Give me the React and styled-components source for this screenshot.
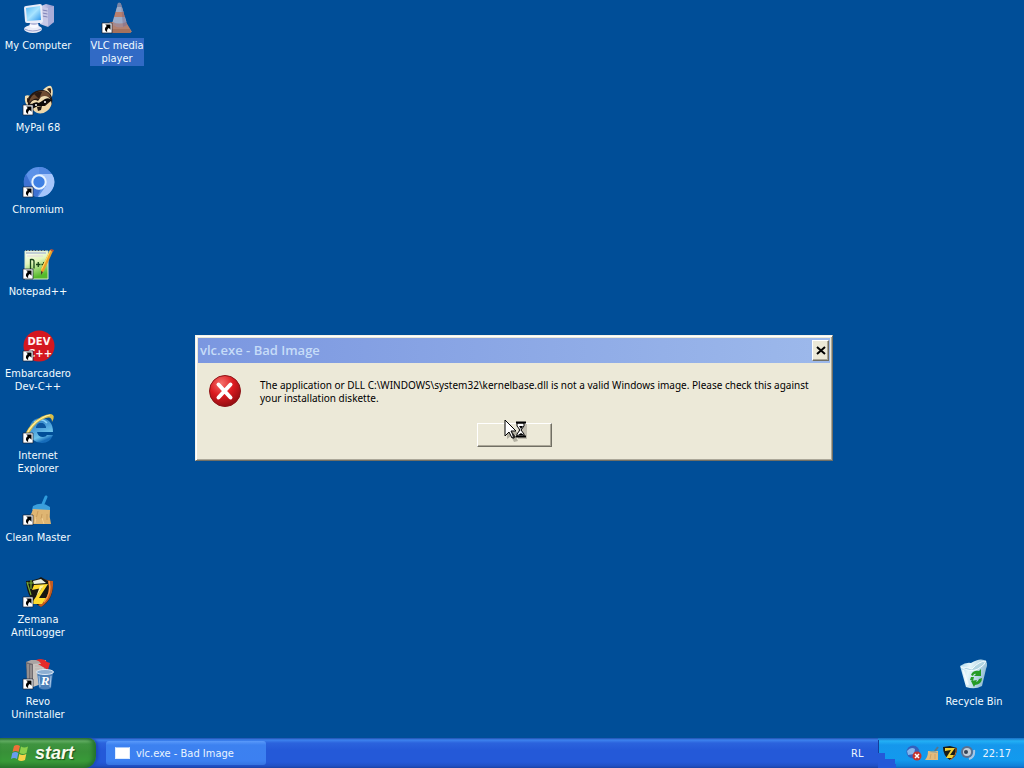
import React from "react";
import styled, { createGlobalStyle, css } from "styled-components";

const GlobalStyle = createGlobalStyle`
  *, *::before, *::after { box-sizing: border-box; }
  body {
    margin: 0;
    font-family: "DejaVu Sans Condensed", "DejaVu Sans", sans-serif;
    font-size: 11px;
    line-height: 13px;
    overflow: hidden;
  }
  button { font: inherit; color: inherit; padding: 0; border: 0; background: none; }
`;

const Screen = styled.div`
  position: relative;
  display: flex;
  flex-direction: column;
  min-height: 100vh;
  background: #004e98;
`;

const Desktop = styled.main`
  flex: 1;
  display: grid;
  grid-template-columns: 76px 82px 1fr 78px;
  grid-template-rows: repeat(9, 82px);
  grid-auto-flow: column;
  padding-right: 11px;
`;

const Shortcut = styled.button`
  display: flex;
  flex-direction: column;
  align-items: center;
  gap: 4px;
  padding-top: 2px;
  color: #f2fbff;
  ${(p) => p.$corner && css`grid-column: 4; grid-row: 9;`}
`;

const Picture = styled.svg`
  display: block;
  flex: none;
  width: 32px;
  height: 32px;
  overflow: visible;
`;

const Label = styled.span`
  padding: 1px 0;
  text-align: center;
  white-space: pre;
  background: ${(p) => (p.$selected ? "#316ac5" : "transparent")};
`;

const Dialog = styled.section`
  position: absolute;
  left: 195px;
  top: 335px;
  width: 638px;
  padding: 3px;
  background: #ece9d8;
  border: 1px solid;
  border-color: #f4f3ea #716f64 #716f64 #f4f3ea;
  box-shadow: inset 1px 1px #fff, inset -1px -1px #aca899;
`;

const TitleBar = styled.header`
  display: flex;
  align-items: center;
  justify-content: space-between;
  height: 25px;
  margin: -1px -1px 0;
  padding: 0 1px 1px 2px;
  background: linear-gradient(90deg, #7b97e0, #9db9eb);
`;

const Title = styled.h1`
  margin: 0;
  font: 600 13px/18px "Open Sans", "Noto Sans", sans-serif;
  color: #c6dcf8;
`;

const CloseButton = styled.button`
  display: grid;
  place-items: center;
  width: 17px;
  height: 21px;
  background: #ece9d8;
  border: 1px solid;
  border-color: #fff #716f64 #716f64 #fff;
  box-shadow: inset -1px -1px #aca899;
`;

const Message = styled.div`
  display: flex;
  gap: 19px;
  padding: 12px 4px 0 10px;
`;

const MessageText = styled.p`
  margin: 0;
  padding-top: 4px;
  font-family: "Noto Sans", "Open Sans", sans-serif;
  font-size: 10px;
  color: #000;
`;

const Actions = styled.footer`
  display: flex;
  justify-content: center;
  padding: 16px 0 10px;
`;

const PushButton = styled.button`
  width: 75px;
  height: 24px;
  background: #ece9d8;
  border: 1px solid;
  border-color: #fff #716f64 #716f64 #fff;
  box-shadow: inset -1px -1px #aca899;
`;

const Pointer = styled.svg`
  position: absolute;
  left: 504px;
  top: 419px;
  width: 26px;
  height: 24px;
  pointer-events: none;
`;

const Taskbar = styled.nav`
  display: flex;
  height: 30px;
  color: #eaf4ff;
  background: linear-gradient(#1f4fae 0, #3d83ee 2px, #2b63dd 5px, #2459d8 12px, #2459d8 24px, #2050c4 28px, #1a42a4 30px);
`;

const StartButton = styled.button`
  display: flex;
  align-items: center;
  gap: 6px;
  width: 96px;
  padding: 0 0 0 11px;
  border-radius: 0 8px 12px 0;
  background: linear-gradient(#2f6f3b 0, #64ae64 3px, #3f9440 6px, #389038 14px, #389a38 23px, #2c7a2e 30px);
  box-shadow: inset -3px 0 4px #22712b, 2px 0 3px #1c47b8;
  font: italic bold 18px/22px "Liberation Sans", sans-serif;
  color: #f8fbee;
  text-shadow: 1px 1px 1px #1b4c1c;
`;

const Flag = styled.svg`
  width: 18px;
  height: 18px;
`;

const TaskButton = styled.button`
  display: flex;
  align-items: center;
  gap: 6px;
  width: 160px;
  height: 24px;
  margin: 3px auto 0 10px;
  padding-left: 9px;
  border-radius: 3px;
  background: linear-gradient(#5a9afa, #3c81f0 4px, #3c80f1 20px, #3674e0);
`;

const WindowGlyph = styled.span`
  width: 15px;
  height: 12px;
  background: #fff;
  border: 1px solid #dcecff;
  border-top-color: #a8c8f8;
`;

const Language = styled.span`
  align-self: center;
  width: 27px;
`;

const Tray = styled.div`
  position: relative;
  display: flex;
  align-items: center;
  width: 146px;
  padding: 0 13px 0 28px;
  background: linear-gradient(#1a6fc4 0, #23b0f5 3px, #1597ec 7px, #129aee 22px, #0f80d8 28px, #0e66c0 30px);
`;

const TrayStep = styled.svg`
  position: absolute;
  left: 0;
  top: 0;
  width: 20px;
  height: 30px;
`;

const TrayIcons = styled.div`
  display: flex;
  gap: 2px;
  margin-right: auto;
`;

const TrayIcon = styled.svg`
  width: 16px;
  height: 16px;
`;

const ShortcutMark = () => (
  <g>
    <path d="M1 21h10v10H1z" fill="#fff" stroke="#182030" strokeWidth=".7" />
    <path d="M4.200 22.500h5.300v5.300L7.800 26C6.200 27 5.800 28.200 6.200 30 3.200 28.500 3.300 26 5.800 24z" fill="#000" />
  </g>
);

const ComputerArt = () => (
  <>
    <defs>
      <linearGradient id="crt" x2="1" y2="1"><stop stopColor="#55b7f5" /><stop offset=".5" stopColor="#a8e4ff" /><stop offset="1" stopColor="#2e95ea" /></linearGradient>
      <linearGradient id="tower" x2="1"><stop stopColor="#dcdaf0" /><stop offset="1" stopColor="#8c90c8" /></linearGradient>
    </defs>
    <path d="M19 4l5-2 8 2v16l-6 5-8-3z" fill="url(#tower)" />
    <path d="M20 5l6 1v18l-6-2z" fill="#c8c8e6" />
    <path d="M20.500 8l5 1M20.500 11l5 1M20.500 14l5 1" stroke="#8084b8" />
    <path d="M26 6l6-2v16l-6 4z" fill="#a9add9" />
    <path d="M2 6Q2 4 4 4l14-2q2 0 2 2l1 15q0 2-2 2L5 21q-2 0-2-2z" fill="#e9ecf8" />
    <path d="M4 6l14-2 1 14-14 1z" fill="url(#crt)" />
    <path d="M8 21h8l1 3H7z" fill="#b7bbdc" />
    <ellipse cx="11" cy="27" rx="9" ry="4" fill="#e9ebf7" />
    <path d="M2.500 27q8 4 17 0" fill="none" stroke="#9da2cd" />
    <path d="M8 22q4 2 8 0v3q-4 2-8 0z" fill="#f8f9ff" />
  </>
);

const ConeArt = () => (
  <>
    <path d="M6 24l3-4h16l6 10H8z" fill="#b48270" />
    <path d="M8 27h21l1 4H9z" fill="#a5725d" />
    <path d="M17 1q2-1 3 1l6 21q-7 5-14 0z" fill="#a58a91" />
    <path d="M16 5l5 0 1.500 5h-8zM13 15h11l1.500 5q-7 3-14 0z" fill="#9dabc6" />
    <path d="M17 1q2-1 3 1l1 3h-5z" fill="#7986a8" />
    <path d="M14.500 10h8l1.300 5H13z" fill="#b9806e" />
    <path d="M20 2l6 21-4 2z" fill="#6d5d80" opacity=".35" />
    <ShortcutMark />
  </>
);

const RaccoonArt = () => (
  <>
    <path d="M3 12q3-2 7 1l-3 10q-5-3-4-11zM21 6q5-5 8-4 3 4 1 11z" fill="#f1ddb0" />
    <path d="M5 14q2 0 2 2l-2 3zM25 5q3-2 4 0l0 5z" fill="#3e2618" />
    <path d="M6 21Q4 11 14 7q10-3 15 4 4 10-4 15-11 6-19-5z" fill="#241813" />
    <path d="M8 15Q13 6 23 7q5 2 6 7-7-4-12 1-5-2-10 4z" fill="#6f4c32" />
    <path d="M12 10q4-3 8-2l-3 7z" fill="#2a1a13" />
    <path d="M8 20q3-6 8-3l3-4q6-3 10 3-6-2-8 2-4 0-6 3-4-2-7-1z" fill="#f0dcb1" />
    <path d="M9 21q4-4 8-2l6-4q5-2 7 2-4 0-7 4l-6 4q-6 1-8-4z" fill="#0b0909" />
    <path d="M10 25l6-3 7 0 6-5q2 5-4 10-8 6-15-2z" fill="#eed8aa" />
    <path d="M15 23l5-1-1 4-3 1z" fill="#1c1513" />
    <circle cx="14" cy="21" r="1" fill="#fff" /><circle cx="23" cy="18" r="1" fill="#fff" />
    <ShortcutMark />
  </>
);

const ChromiumArt = () => (
  <>
    <circle cx="17" cy="16" r="15" fill="#5c92e8" />
    <path d="M17 1a15 15 0 0 1 15 15H17z" fill="#5289e2" />
    <path d="M17 8h13A15 15 0 0 1 16 31l8-11z" fill="#a5c5fb" />
    <path d="M4 8l6 12q4 5 9 3l-4 8A15 15 0 0 1 4 8z" fill="#3e72d2" />
    <circle cx="17" cy="16" r="7.700" fill="#e8f4ff" />
    <circle cx="17" cy="16" r="5.700" fill="#3e80e3" />
    <ShortcutMark />
  </>
);

const NotepadArt = () => (
  <>
    <defs><linearGradient id="page" x2=".3" y2="1"><stop stopColor="#fff" /><stop offset=".45" stopColor="#e2f6bc" /><stop offset="1" stopColor="#55b92b" /></linearGradient></defs>
    <path d="M3 3h23v28H3z" fill="url(#page)" stroke="#dbe9c8" />
    <path d="M4 5h20" stroke="#c1ced4" strokeWidth="2" />
    <path d="M4 2.500h20" stroke="#445" strokeDasharray="1 2" />
    <path d="M5 8h16" stroke="#e3d8dc" />
    <path d="M8.500 21v-10M8.500 11.500h1.500q2 0 2 2v7M14 16.500h4.500M16.250 14v5M19.500 16.500h4.500M21.750 14v5" fill="none" stroke="#184418" strokeWidth="1.300" />
    <path d="M28 2l3 1-9 20-3 3 0-5z" fill="#ec9f28" />
    <path d="M28 2l1 .500-9 19-1 0z" fill="#ffe266" />
    <path d="M28 2l1-1 3 1-1 2z" fill="#b85037" /><path d="M19 23l2 1-2 3z" fill="#44362c" />
    <ShortcutMark />
  </>
);

const BadgeText = styled.text`
  font: bold 10px "DejaVu Sans", sans-serif;
  fill: #fff4f2;
  text-anchor: middle;
`;

const DevArt = () => (
  <>
    <circle cx="17" cy="16" r="15.500" fill="#d4171f" />
    <BadgeText x="17" y="15">DEV</BadgeText>
    <BadgeText x="18" y="27">C++</BadgeText>
    <ShortcutMark />
  </>
);

const ExplorerArt = () => (
  <>
    <defs><linearGradient id="globe" x2=".4" y2="1"><stop stopColor="#2474bd" /><stop offset=".5" stopColor="#4c9fda" /><stop offset=".8" stopColor="#6cc3ec" /><stop offset="1" stopColor="#166cba" /></linearGradient></defs>
    <path d="M31 20H15q1 5 6 5 3 0 4-2h6q-3 8-11 8Q8 30 7 19 8 6 19 6q12 1 12 14zM14 16h10q-1-5-5-5-4 0-5 5z" fill="url(#globe)" />
    <path d="M14 16h10q-1-5-5-5-4 0-5 5z" fill="#0c559f" />
    <path d="M12 10q8-5 13 1" fill="none" stroke="#8cd2f7" strokeWidth="1.500" />
    <path d="M3 29Q1 21 10 12 20 2 29 2q5 1 1 8 0-6-6-4Q14 9 8 20q-3 5-5 9z" fill="#d9bd48" />
    <path d="M4 25Q6 17 14 10 22 4 28 3" fill="none" stroke="#fff0a2" strokeWidth="1.200" />
    <ShortcutMark />
  </>
);

const BroomArt = () => (
  <>
    <path d="M21 10l3-7" stroke="#2f9ddd" strokeWidth="3" strokeLinecap="round" />
    <path d="M11 12q9-5 17 1v4l-18-1z" fill="#3b9fdc" />
    <path d="M11 15l17 1q-1 7 1 14H8q-5 0-6-3 7-4 9-12z" fill="#dfb572" />
    <path d="M16 17l-2 8M20 20l-1 5M25 20l0 6" stroke="#c99c5c" />
    <path d="M20 24l2 6M14 23l-1 6" stroke="#f3cf92" />
    <ShortcutMark />
  </>
);

const ZemanaArt = () => (
  <>
    <path d="M4 5q11-1 15-4 6 4 12 4 1 19-12 26Q5 24 4 5z" fill="#171711" />
    <path d="M18 1q7 4 13 4 1 18-12 26l-3-2Q30 22 26 5z" fill="#c15b21" />
    <path d="M27 5q3 12-5 21" fill="none" stroke="#ff9640" strokeWidth="1.500" />
    <path d="M5 6l4 13M5 7l7 0M9 4v9" fill="none" stroke="#77aa33" strokeWidth="1.200" />
    <path d="M12 9l14-1-9 14h7l-4 6H9l11-16-10 2z" fill="#ffdb2e" />
    <path d="M11 5l8-2 5 4-12 1z" fill="#e9eee0" /><path d="M18 10l4-1-8 12z" fill="#fff4a0" />
    <ShortcutMark />
  </>
);

const RevoText = styled.text`
  font: italic bold 13px "Liberation Serif", serif;
  fill: #fff;
  text-anchor: middle;
`;

const RevoArt = () => (
  <>
    <path d="M4 4l5-2h15v25H7z" fill="#aaa5a3" />
    <path d="M4 4l7 2v24l-6-4z" fill="#6f6b70" />
    <path d="M11 6l11-1v20l-11 4z" fill="#c9c4bf" />
    <path d="M6 6v19M9 7v20M13 8h8M13 11h7" stroke="#b9b3ae" />
    <path d="M14 2Q21-1 25 4l3 1-2 7-10-6 3 0q-1-3-5-4z" fill="#e42b2a" />
    <path d="M15 14l16 0-2 16q-6 3-12 0z" fill="#4c80b9" />
    <ellipse cx="23" cy="14" rx="8.500" ry="2.500" fill="#8caed2" stroke="#dce8f5" />
    <path d="M17 18l1 11M29 18l-1 11" stroke="#a7c7e8" />
    <RevoText x="23" y="27">R</RevoText>
    <ShortcutMark />
  </>
);

const RecycleArt = () => (
  <>
    <defs><linearGradient id="bin" x2="1" y2=".3"><stop stopColor="#a5d3e8" /><stop offset=".4" stopColor="#e6f7fb" /><stop offset="1" stopColor="#94bed5" /></linearGradient></defs>
    <path d="M2 8q6-4 11-3Q21 0 26 2q5 2 2 9l-4 17q-7 4-16 1z" fill="url(#bin)" />
    <path d="M3 9q6 0 11 2Q21 3 28 3q-1 4-8 8-8 4-17-2z" fill="#b2d5e2" stroke="#f2fcff" />
    <path d="M5 12l5 15" stroke="#fff" strokeWidth="2" opacity=".7" />
    <g fill="#259b26">
      <path d="M13 17q2-5 8-4l2-2v7h-7l2-2q-2-1-3 2z" />
      <path d="M24 20q0 6-7 7l-1 2-3-6 6-1-1 2q2 0 3-3z" />
      <path d="M13 19l3 0-1 4-3-1z" />
    </g>
  </>
);

const ErrorArt = () => (
  <Picture viewBox="0 0 32 32" aria-hidden="true">
    <defs><radialGradient id="alert" cx=".38" cy=".25" r=".8"><stop stopColor="#f5706b" /><stop offset=".5" stopColor="#db1b20" /><stop offset="1" stopColor="#8c0c10" /></radialGradient></defs>
    <circle cx="16" cy="16" r="15.500" fill="url(#alert)" stroke="#8e1518" />
    <path d="M9.500 9.500l12 13M21.500 9.500l-12 13" stroke="#fff" strokeWidth="4" strokeLinecap="round" />
  </Picture>
);

const shortcuts = [
  { name: "My Computer", Art: ComputerArt },
  { name: "MyPal 68", Art: RaccoonArt },
  { name: "Chromium", Art: ChromiumArt },
  { name: "Notepad++", Art: NotepadArt },
  { name: "Embarcadero\nDev-C++", Art: DevArt },
  { name: "Internet\nExplorer", Art: ExplorerArt },
  { name: "Clean Master", Art: BroomArt },
  { name: "Zemana\nAntiLogger", Art: ZemanaArt },
  { name: "Revo\nUninstaller", Art: RevoArt },
  { name: "VLC media\nplayer", Art: ConeArt, selected: true },
  { name: "Recycle Bin", Art: RecycleArt, corner: true },
];

export default function App() {
  return (
    <>
      <GlobalStyle />
      <Screen>
        <Desktop>
          {shortcuts.map(({ name, Art, selected, corner }) => (
            <Shortcut key={name} type="button" $corner={corner}>
              <Picture viewBox="0 0 32 32" aria-hidden="true"><Art /></Picture>
              <Label $selected={selected}>{name}</Label>
            </Shortcut>
          ))}
        </Desktop>

        <Dialog role="alertdialog" aria-labelledby="dialog-title" aria-describedby="dialog-text">
          <TitleBar>
            <Title id="dialog-title">vlc.exe - Bad Image</Title>
            <CloseButton type="button" aria-label="Close">
              <svg width="10" height="9" viewBox="0 0 10 9" aria-hidden="true">
                <path d="M1 1l8 7M9 1l-8 7" stroke="#000" strokeWidth="2" />
              </svg>
            </CloseButton>
          </TitleBar>
          <Message>
            <ErrorArt />
            <MessageText id="dialog-text">
              The application or DLL C:\WINDOWS\system32\kernelbase.dll is not a valid Windows image. Please check this against your installation diskette.
            </MessageText>
          </Message>
          <Actions>
            <PushButton type="button" aria-label="OK" />
          </Actions>
        </Dialog>

        <Taskbar>
          <StartButton type="button">
            <Flag viewBox="0 0 18 18" aria-hidden="true">
              <path d="M3 2q3-2 6 0L7.500 8q-3-2-6 0z" fill="#ef7038" />
              <path d="M10 2.500q3 2 7 0L15.500 9q-3 2-7 0z" fill="#8bd04c" />
              <path d="M1.300 9q3-2 6 0L6 15q-3-2-6 0z" fill="#699dee" />
              <path d="M8.300 10q3 2 7 0L14 16q-4 2-7 0z" fill="#f7d248" />
            </Flag>
            start
          </StartButton>
          <TaskButton type="button">
            <WindowGlyph />
            vlc.exe - Bad Image
          </TaskButton>
          <Language>RL</Language>
          <Tray>
            <TrayStep viewBox="0 0 20 30" aria-hidden="true">
              <path d="M0 15h7v6h10v5h1v4H0z" fill="#2459d8" />
              <path d="M0 2v13" stroke="#153e9c" strokeWidth="2" />
            </TrayStep>
            <TrayIcons>
              <TrayIcon viewBox="0 0 16 16" aria-hidden="true">
                <circle cx="7" cy="7" r="6.500" fill="#3260bd" />
                <path d="M1 6q4-5 8-2l-1 5-6 1z" fill="#85b6eb" />
                <circle cx="11" cy="11" r="4.500" fill="#c4332f" />
                <path d="M9 9l4 4M13 9l-4 4" stroke="#fff" strokeWidth="1.500" />
              </TrayIcon>
              <TrayIcon viewBox="0 0 16 16" aria-hidden="true">
                <path d="M11 6l3-4" stroke="#58758b" strokeWidth="2" />
                <path d="M4 6l10 0v9H1q3-3 3-9z" fill="#e2bb7e" />
                <path d="M5 7q5-3 9 1z" fill="#8aa4a0" />
                <path d="M7 9l-1 5M11 9v5" stroke="#cfa468" />
              </TrayIcon>
              <TrayIcon viewBox="0 0 16 16" aria-hidden="true">
                <path d="M1 2l7-1 7 2q0 9-7 12-7-4-7-13z" fill="#191b17" />
                <path d="M14 3q1 8-6 12" fill="none" stroke="#c66a28" />
                <path d="M3 3h10l-5 7h4l-2 3H4l5-8-6 1z" fill="#f1d036" />
              </TrayIcon>
              <TrayIcon viewBox="0 0 16 16" aria-hidden="true">
                <circle cx="7" cy="7" r="6" fill="#5c718f" />
                <circle cx="7" cy="7" r="4" fill="#c4ced8" />
                <circle cx="6" cy="7" r="2" fill="#344457" />
                <path d="M9 14q6-2 5-9" fill="none" stroke="#a9c7e5" strokeWidth="2" />
              </TrayIcon>
            </TrayIcons>
            <time>22:17</time>
          </Tray>
        </Taskbar>

        <Pointer viewBox="0 0 26 24" aria-hidden="true">
          <path d="M3 4v16l4-3 3 6 4-1-3-6h5z" fill="#6f6c62" opacity=".45" />
          <path d="M1 1v16l4-4 3 6 2-1-3-6h5z" fill="#fff" stroke="#000" />
          <path d="M8 13l4 5-3 2z" fill="#222" />
          <path d="M14 5h9v15h-9z" fill="#77746a" opacity=".35" />
          <path d="M13 4h7v3l-3 4 3 4v2h-7v-2l3-4-3-4z" fill="#fff" stroke="#000" />
          <path d="M12 3.500h10M12 17.500h10" stroke="#000" strokeWidth="2" />
          <path d="M15 7h4l-2 3zM14 16l3-2 3 2z" fill="#000" />
        </Pointer>
      </Screen>
    </>
  );
}
